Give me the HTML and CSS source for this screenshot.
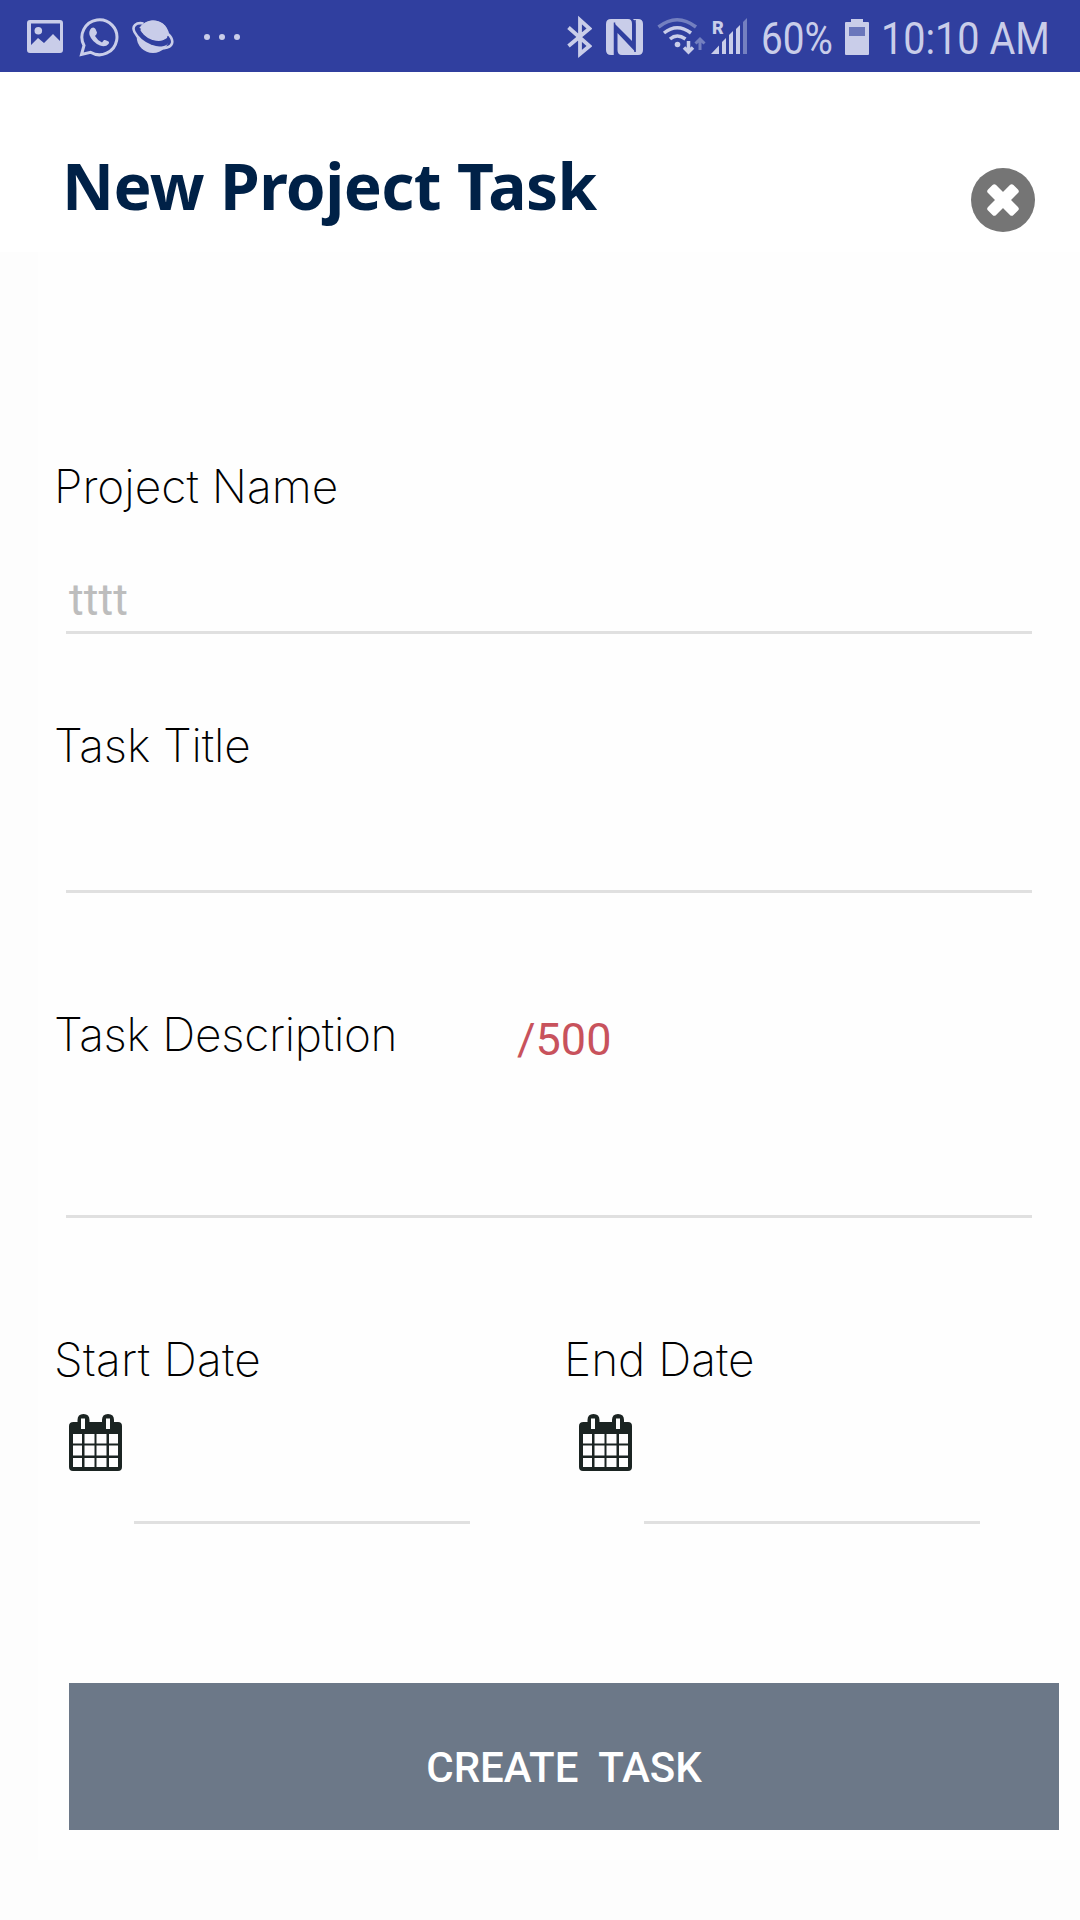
FILE: index.html
```html
<!DOCTYPE html>
<html lang="en">
<head>
<meta charset="utf-8">
<title>New Project Task</title>
<link rel="stylesheet" href="styles.css">
</head>
<body>
<svg class="defs" aria-hidden="true">
  <symbol id="calendar" viewBox="0 0 54 58">
    <path fill="#1b2422" fill-rule="evenodd" d="M4.500 8H8.500V6Q8.500 0 14.500 0Q20.500 0 20.500 6V8H33V6Q33 0 39 0Q45 0 45 6V8H49Q53 8 53 12V53Q53 57 49 57H4Q0 57 0 53V12Q0 8 4.500 8ZM12 4.500V15H16V4.500ZM37 4.500V15H41V4.500Z"/>
    <path fill="#fefefe" d="M4 20h9v9.500H4zM15.500 20h10v9.500h-10zM27.500 20h10v9.500h-10zM40 20h9v9.500h-9zM4 31.500h9v10H4zM15.500 31.500h10v10h-10zM27.500 31.500h10v10h-10zM40 31.500h9v10h-9zM4 44h9v9H4zM15.500 44h10v9h-10zM27.500 44h10v9h-10zM40 44h9v9h-9z"/>
  </symbol>
</svg>

<header class="status">
  <div class="status-left">
    <svg width="36" height="72" viewBox="27 0 36 72" fill="#c9cde9"><path fill-rule="evenodd" d="M30 20H60Q63 20 63 23V50Q63 53 60 53H30Q27 53 27 50V23Q27 20 30 20ZM31 23.500V45L38 38L44 43L53 34L60 41V23.500Z"/><circle cx="38.300" cy="30.800" r="3.800"/></svg>
    <svg width="40" height="72" viewBox="79 0 40 72"><path fill="none" stroke="#c9cde9" stroke-width="3" d="M81.500 54.500L84 45.500A17.500 17.500 0 1 1 90.500 52.300Z"/><path fill="#c9cde9" d="M91.500 28Q94 26.500 95.500 29L97 32.500Q97 34 95 36Q97.500 40.500 102 42.500L104 40Q105 39.500 107.500 41Q110 42 108.500 44Q105.500 47.500 100 45.500Q92 42 89.500 35Q88.500 31 91.500 28Z"/></svg>
    <svg width="42" height="72" viewBox="132 0 42 72"><circle cx="153" cy="36.700" r="16.300" fill="#c9cde9"/><path fill="none" stroke="#303f9f" stroke-width="5.600" d="M139.500 28C137 34 144 40 152 42.800C160 45 168 44 168.500 36"/><path fill="none" stroke="#c9cde9" stroke-width="2.600" d="M143.500 23.500C136 22 131.500 26 134.500 32C138 39 144 43 151 46C160 49.500 170 49 172 43.500C173 40 171 36.500 167.500 33.500"/><path fill="#c9cde9" d="M141 27C145 20 156 18.500 162 23C167 26 169 32 167 38C160 43.500 145 38 140.500 30.500Z"/></svg>
    <svg class="more" width="36" height="72" viewBox="204 0 36 72" fill="#c9cde9"><circle cx="207" cy="37" r="3"/><circle cx="222" cy="37" r="3"/><circle cx="237" cy="37" r="3"/></svg>
  </div>
  <div class="status-right">
    <svg width="25" height="72" viewBox="567 0 25 72"><path fill="none" stroke="#c9cde9" stroke-width="3.800" d="M568.500 27.500L589.500 46L580 54V20L589.500 28.500L568.500 46"/></svg>
    <svg class="nfc" width="37" height="72" viewBox="606 0 37 72"><path fill="#c9cde9" d="M611 19H628Q632 19 632 24V41L614 23V55H611Q606 55 606 50V24Q606 19 611 19ZM633 19H638Q643 19 643 24V50Q643 55 638 55H622Q617.500 55 617.500 50V33L635.500 52V24Q635.500 21 633 19Z"/><path d="M614.500 22.500V55M635 52V20" stroke="#303f9f" stroke-width="1.500"/></svg>
    <svg class="wifi" width="49" height="72" viewBox="657 0 49 72" fill="none"><path stroke="#7480c0" stroke-width="3.500" d="M658.500 27Q677 12.500 696 27"/><g stroke="#c9cde9" stroke-width="3.500"><path d="M664 33Q677 22.500 691 33M670 39Q677 33 685.500 39"/><path d="M688.500 41V52M684 47.500L688.500 52L693 47.500"/></g><circle cx="677.500" cy="44.500" r="2.800" fill="#c9cde9"/><path stroke="#7480c0" stroke-width="3" d="M700 50V40M695.500 43.500L700 39L704.500 43.500"/></svg>
    <div class="signal">
      <svg width="37" height="72" viewBox="711 0 37 72"><path fill="#c9cde9" d="M711 54L719 45.500V54ZM722 42L726 38V54H722ZM729 35L733 31V54H729ZM736 29L740 25V54H736Z"/><path fill="#7480c0" d="M743 22L747 18V54H743Z"/></svg>
      <span class="roaming">R</span>
    </div>
    <span class="percent">60%</span>
    <svg width="24" height="72" viewBox="845 0 24 72"><path fill="#c9cde9" d="M851 22V19H863V22H868Q869 22 869 23V54Q869 55 868 55H846Q845 55 845 54V23Q845 22 846 22Z"/><path fill="#6a76bb" d="M849 27H865V36H849Z"/></svg>
    <span class="clock">10:10 AM</span>
  </div>
</header>

<div class="titlebar">
  <h1>New Project Task</h1>
  <svg class="close" width="64" height="64" viewBox="0 0 64 64"><circle cx="32" cy="32" r="32" fill="#757575"/><g fill="#fff"><rect x="14" y="26.300" width="36" height="11.400" rx="2.500" transform="rotate(45 32 32)"/><rect x="14" y="26.300" width="36" height="11.400" rx="2.500" transform="rotate(-45 32 32)"/></g></svg>
</div>

<main class="panel">
  <section class="field project">
    <label class="label">Project Name</label>
    <div class="input">tttt</div>
  </section>
  <section class="field task">
    <label class="label task-label">Task Title</label>
    <div class="input"></div>
  </section>
  <section class="field description">
    <div class="label-row"><label class="label desc-label">Task Description</label><span class="counter">/500</span></div>
    <div class="input"></div>
  </section>
  <section class="dates">
    <div class="date">
      <label class="label start-label">Start Date</label>
      <div class="date-row"><svg width="54" height="58"><use href="#calendar"/></svg><div class="date-input"></div></div>
    </div>
    <div class="date">
      <label class="label end-label">End Date</label>
      <div class="date-row"><svg width="54" height="58"><use href="#calendar"/></svg><div class="date-input"></div></div>
    </div>
  </section>
  <button class="create" type="button">CREATE&nbsp; TASK</button>
</main>
</body>
</html>
```
FILE: styles.css
```css
* { box-sizing: border-box; }
body { margin: 0; width: 1080px; height: 1920px; overflow: hidden; background: #fdfdfd; font-family: Roboto, sans-serif; }
svg { display: block; flex: none; }
.defs { position: absolute; width: 0; height: 0; }

.status { display: flex; justify-content: space-between; height: 72px; padding: 0 33px 0 27px; background: #303f9f; color: #c9cde9; }
.status-left, .status-right { display: flex; }
.status-left { gap: 13px; }
.status-left svg:nth-child(2) { margin-left: 3px; }
.more { margin-left: 17px; }
.nfc, .wifi { margin-left: 14px; }
.signal { position: relative; margin-left: 5px; }
.roaming { position: absolute; left: 1px; top: 17px; font-size: 18px; line-height: 21px; font-weight: 900; }
.percent, .clock { font-size: 45px; line-height: 77px; white-space: nowrap; transform-origin: left center; }
.percent { width: 71px; margin: 0 13px; transform: scaleX(.86); }
.clock { width: 166px; margin-left: 12px; transform: scaleX(.88); }

.titlebar { display: flex; justify-content: space-between; height: 180px; padding: 0 45px 0 62px; background: #fff; }
h1 { margin: 70px 0 0; font: 700 64px/88px "Noto Sans", sans-serif; letter-spacing: -.6px; color: #002147; white-space: nowrap; }
.close { margin-top: 96px; }

.panel { display: flex; flex-direction: column; margin-left: 38px; height: 1608px; padding: 206px 21px 0 16px; background: #fefefe; }
.label { display: block; height: 56px; font: 200 46px/56px Inter, sans-serif; color: #000; white-space: nowrap; }
.task-label { letter-spacing: -.15px; }
.desc-label { width: 463px; letter-spacing: -.27px; }
.start-label { letter-spacing: .3px; }
.field { display: flex; flex-direction: column; margin-right: 27px; }
.input { height: 120px; margin-left: 12px; padding: 60px 0 0 3px; border-bottom: 3px solid #e0e0e0; font-size: 45px; line-height: 52px; color: #bdbdbd; }
.project { height: 176px; }
.task { height: 176px; margin-top: 83px; }
.description { height: 212px; margin-top: 113px; }
.description .input { height: 156px; }
.label-row { display: flex; }
.counter { height: 56px; font-size: 45px; line-height: 67px; color: #c8525c; }
.dates { display: grid; grid-template-columns: 510px 510px; margin-top: 113px; }
.date-row { display: flex; align-items: flex-start; gap: 11px; padding: 27px 0 0 15px; }
.date-input { width: 336px; height: 110px; border-bottom: 3px solid #e0e0e0; }
.create { flex: none; height: 147px; margin: 159px 0 0 15px; padding: 22px 0 0; border: 0; background: #6c7888; color: #fff; font: 500 42px/50px Roboto, sans-serif; }
```
